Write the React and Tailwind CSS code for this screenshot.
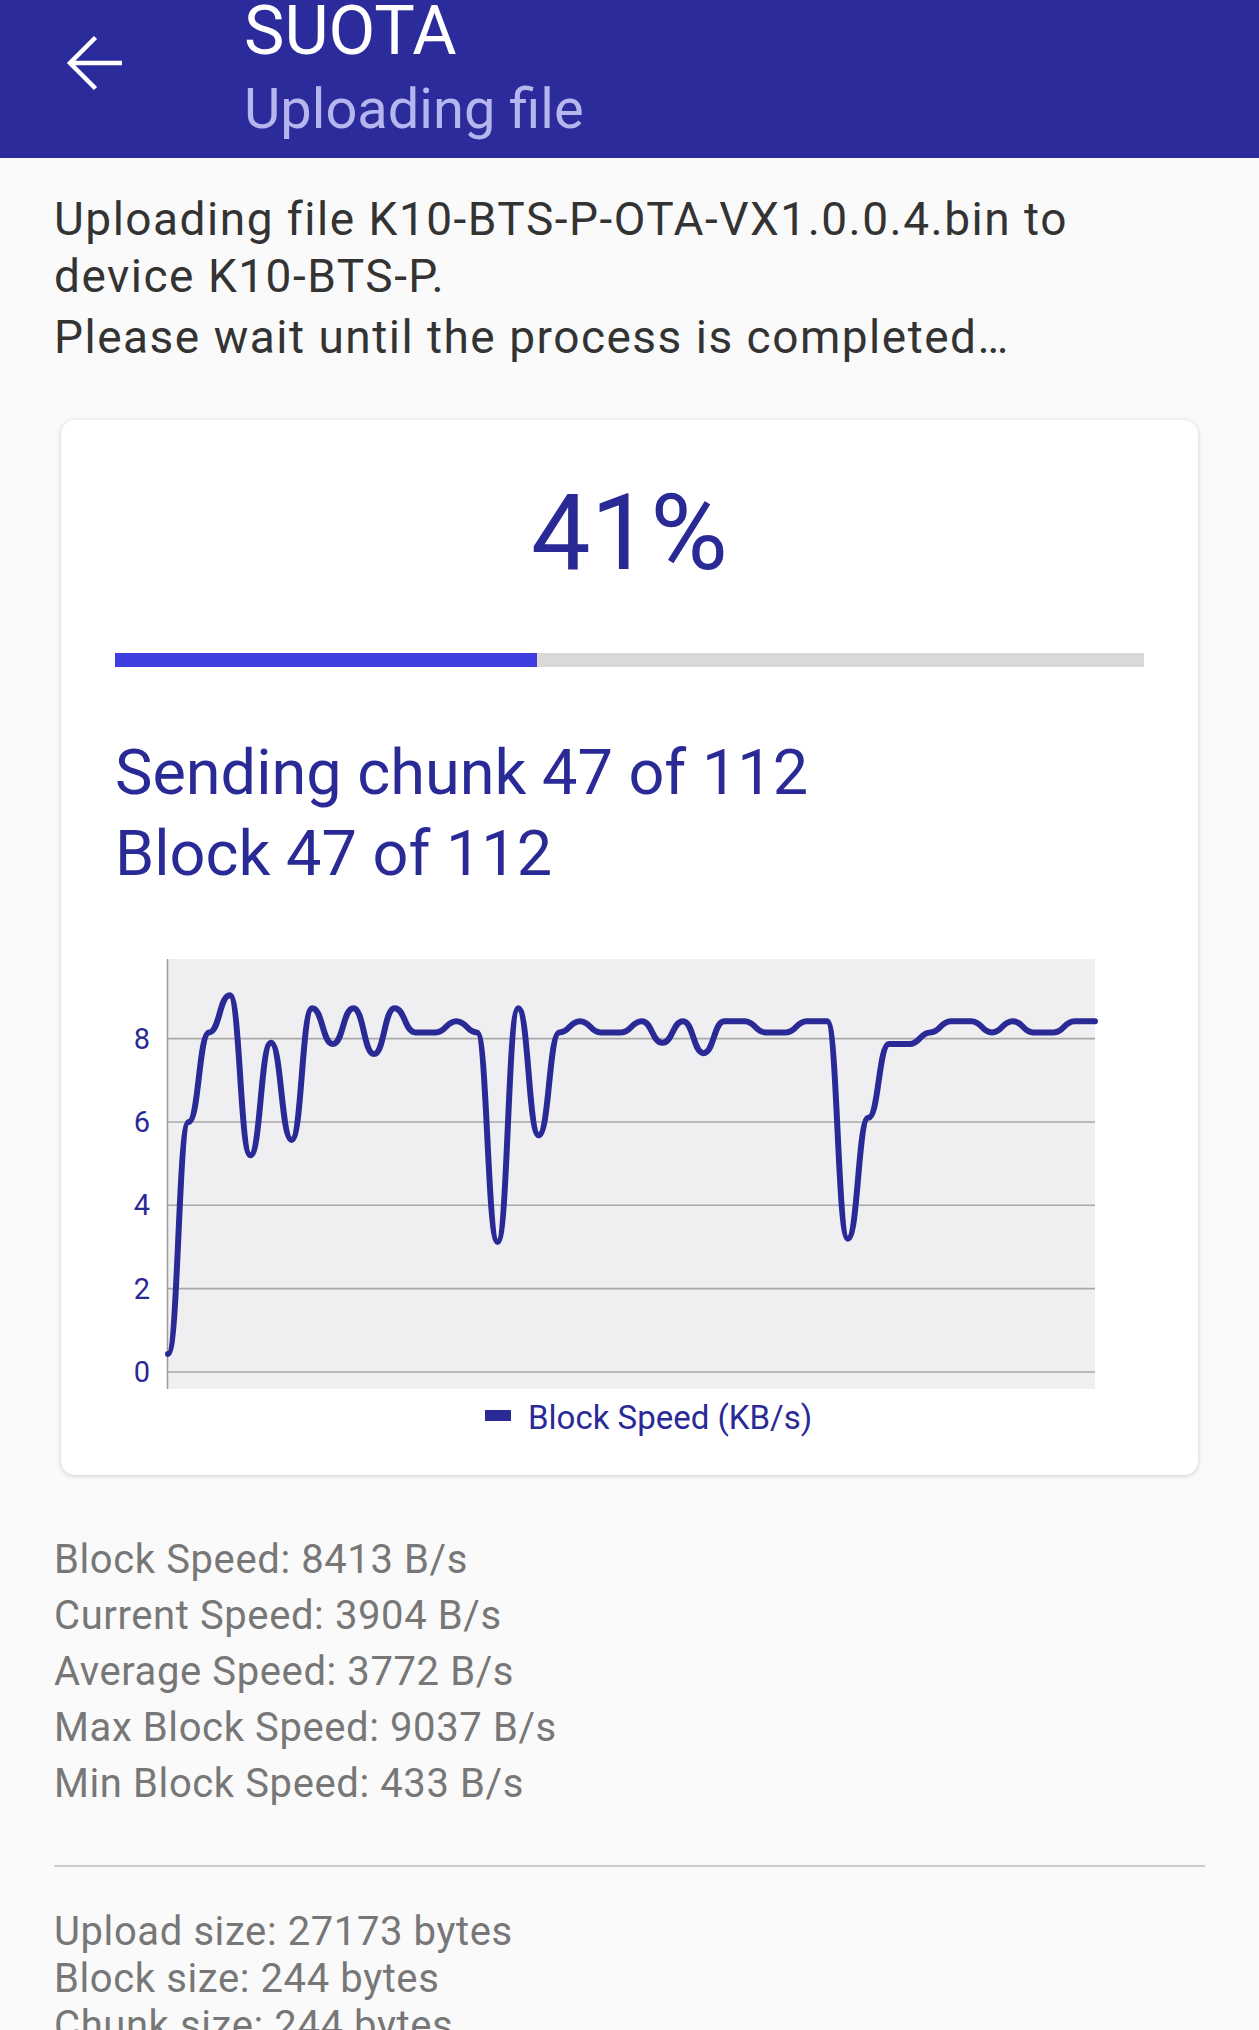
import React from "react";

const DATA = [
  0.43, 6.0, 8.15, 9.04, 5.2, 7.9, 5.57, 8.73, 7.87, 8.73, 7.63, 8.73, 8.15,
  8.15, 8.42, 8.15, 3.12, 8.73, 5.68, 8.15, 8.42, 8.15, 8.15, 8.42, 7.9, 8.42,
  7.65, 8.42, 8.42, 8.15, 8.15, 8.42, 8.42, 3.2, 6.1, 7.87, 7.87, 8.15, 8.42,
  8.42, 8.15, 8.42, 8.15, 8.15, 8.42, 8.42,
];

const PX0 = 53;
const PW = 927;
const Y0 = 413;
const UNIT = 41.67;

function buildPath(data) {
  const dx = PW / (data.length - 1);
  const pts = data.map((v, i) => [PX0 + i * dx, Y0 - v * UNIT]);
  let d = `M${pts[0][0].toFixed(2)} ${pts[0][1].toFixed(2)}`;
  for (let i = 1; i < pts.length; i++) {
    const [x0, y0] = pts[i - 1];
    const [x1, y1] = pts[i];
    const cx = (x0 + x1) / 2;
    d += ` C${cx.toFixed(2)} ${y0.toFixed(2)} ${cx.toFixed(2)} ${y1.toFixed(2)} ${x1.toFixed(2)} ${y1.toFixed(2)}`;
  }
  return d;
}

function Chart() {
  const grid = [0, 2, 4, 6, 8];
  return (
    <svg width="1030" height="490" viewBox="0 0 1030 490" className="block" fontFamily="Roboto, sans-serif">
      <rect x="52" y="0" width="928" height="430" fill="#efeff1" />
      {grid.map((v) => {
        const y = Y0 - v * UNIT;
        return (
          <g key={v}>
            <line x1="52" x2="980" y1={y} y2={y} stroke="#a9a9a9" strokeWidth="1.6" />
            <text x="35" y={y + 10} fontSize="29" fill="#2a2a96" textAnchor="end">
              {v}
            </text>
          </g>
        );
      })}
      <line x1="52.5" x2="52.5" y1="0" y2="430" stroke="#9a9a9a" strokeWidth="1.5" />
      <path d={buildPath(DATA)} fill="none" stroke="#2a2a96" strokeWidth="6" strokeLinejoin="round" strokeLinecap="round" />
      <rect x="370" y="451" width="26" height="11" fill="#2a2a96" />
      <text x="413" y="470" fontSize="33" fill="#2a2a96">
        Block Speed (KB/s)
      </text>
    </svg>
  );
}

export default function App() {
  return (
    <div className="h-[2030px] overflow-hidden bg-[#fafafa] font-['Roboto',sans-serif]">
      <header className="h-[158px] bg-[#2b2b9b] flex">
        <div className="w-[244px] shrink-0 pl-[66px] pt-[34px]">
          <svg width="60" height="60" viewBox="0 0 60 60">
            <path d="M56 29H4M29.5 3.5L4 29L29.5 54.5" fill="none" stroke="#ffffff" strokeWidth="4.5" strokeLinejoin="miter" />
          </svg>
        </div>
        <div className="flex flex-col">
          <div className="text-[68px] leading-[62px] text-white">SUOTA</div>
          <div className="mt-[17px] text-[56px] leading-[60px] text-[#b6b6ee]">Uploading file</div>
        </div>
      </header>

      <div className="px-[54px] pt-[33px] text-[46px] tracking-[1.5px] text-[#333333]">
        <p className="leading-[57px]">Uploading file K10-BTS-P-OTA-VX1.0.0.4.bin to device K10-BTS-P.</p>
        <p className="mt-[4px] leading-[57px]">Please wait until the process is completed…</p>
      </div>

      <div className="mx-[61px] mt-[54px] rounded-[14px] bg-white px-[54px] pt-[60px] pb-[26px] shadow-[0_1px_5px_rgba(0,0,0,0.18)]">
        <div className="text-center text-[106px] leading-[106px] text-[#2a2a96]">41%</div>
        <div className="mt-[67px] h-[14px] w-full bg-[#d9d9d9]">
          <div className="h-full w-[41%] bg-[#3f3fe1]" />
        </div>
        <div className="mt-[65px] text-[63px] leading-[81px] text-[#2a2a96]">
          <div>Sending chunk 47 of 112</div>
          <div>Block 47 of 112</div>
        </div>
        <div className="mt-[65px]">
          <Chart />
        </div>
      </div>

      <div className="mt-[57px] px-[54px] text-[40px] leading-[56px] tracking-[0.6px] text-[#777777]">
        <div>Block Speed: 8413 B/s</div>
        <div>Current Speed: 3904 B/s</div>
        <div>Average Speed: 3772 B/s</div>
        <div>Max Block Speed: 9037 B/s</div>
        <div>Min Block Speed: 433 B/s</div>
      </div>

      <div className="mx-[54px] mt-[53px] h-[2px] bg-[#cccccc]" />

      <div className="mt-[41px] px-[54px] text-[40px] leading-[47px] tracking-[0.6px] text-[#777777]">
        <div>Upload size: 27173 bytes</div>
        <div>Block size: 244 bytes</div>
        <div>Chunk size: 244 bytes</div>
      </div>
    </div>
  );
}
